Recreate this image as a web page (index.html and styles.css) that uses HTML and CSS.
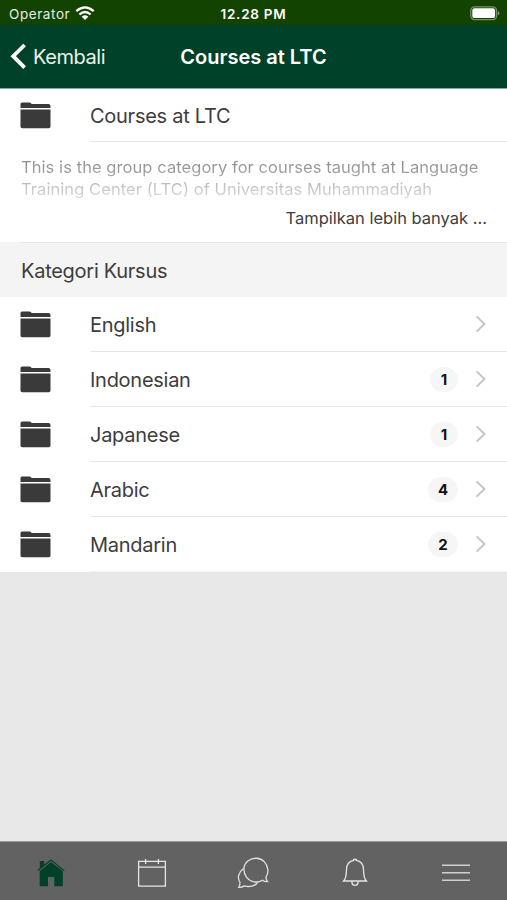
FILE: index.html
```html
<!DOCTYPE html>
<html lang="id">
<head>
<meta charset="utf-8">
<title>Courses at LTC</title>
<link rel="stylesheet" href="styles.css">
</head>
<body>
<svg class="defs" width="0" height="0" aria-hidden="true">
  <symbol id="folder" viewBox="0 0 31 27"><path d="M.5 6V2Q.5.5 2 .5H9.5Q11 .5 11.7 2H28.5Q30.5 2 30.5 4V6Z"/><path d="M.5 7.5H30.5V24.5Q30.5 26.2 28.8 26.2H2.2Q.5 26.2.5 24.5Z"/></symbol>
  <symbol id="chevron" viewBox="0 0 12 18"><path d="M1.6 1.4 9.5 9 1.6 16.6" fill="none" stroke="#c5c5c5" stroke-width="2"/></symbol>
</svg>
<div class="status">
  <div class="carrier"><span>Operator</span>
    <svg width="20" height="15" viewBox="0 0 20 15" fill="none" stroke="#fff" stroke-width="2.3"><path d="M1.3 5.2Q10-2.5 18.7 5.2M4.4 8.5Q10 3.4 15.6 8.5"/><path d="M10 14 6.7 10.7Q10 8 13.3 10.7Z" fill="#fff" stroke="none"/></svg>
  </div>
  <div class="time">12.28 PM</div>
  <svg class="battery" width="30" height="15" viewBox="0 0 30 15"><rect x=".8" y=".8" width="25.8" height="12.8" rx="3.8" fill="none" stroke="#789166" stroke-width="1.3"/><rect x="2.3" y="2.3" width="22.8" height="9.8" rx="2.2" fill="#fff"/><path d="M27.8 5Q29.5 5.7 29.5 7.2T27.8 9.4Z" fill="#789166"/></svg>
</div>
<header class="header">
  <div class="back"><svg width="17" height="28" viewBox="0 0 17 28"><path d="M14.6 2 3.2 13.2 14.6 24.6" fill="none" stroke="#fff" stroke-width="3.8"/></svg><span>Kembali</span></div>
  <h1 class="title">Courses at LTC</h1>
</header>
<main class="content">
  <div class="row first"><svg class="folder"><use href="#folder"/></svg><div class="label"><span class="name heading">Courses at LTC</span></div></div>
  <section class="summary">
    <p class="description"><span class="line one">This is the group category for courses taught at Language</span><span class="line two">Training Center (LTC) of Universitas Muhammadiyah</span></p>
    <div class="more"><span>Tampilkan lebih banyak ...</span></div>
  </section>
  <h2 class="divider"><span>Kategori Kursus</span></h2>
  <div class="row"><svg class="folder"><use href="#folder"/></svg><div class="label"><span class="name">English</span><svg class="chevron"><use href="#chevron"/></svg></div></div>
  <div class="row"><svg class="folder"><use href="#folder"/></svg><div class="label"><span class="name">Indonesian</span><span class="badge">1</span><svg class="chevron"><use href="#chevron"/></svg></div></div>
  <div class="row"><svg class="folder"><use href="#folder"/></svg><div class="label"><span class="name">Japanese</span><span class="badge">1</span><svg class="chevron"><use href="#chevron"/></svg></div></div>
  <div class="row"><svg class="folder"><use href="#folder"/></svg><div class="label"><span class="name">Arabic</span><span class="badge wide">4</span><svg class="chevron"><use href="#chevron"/></svg></div></div>
  <div class="row"><svg class="folder"><use href="#folder"/></svg><div class="label last"><span class="name">Mandarin</span><span class="badge wide">2</span><svg class="chevron"><use href="#chevron"/></svg></div></div>
</main>
<nav class="tabs">
  <div class="tab"><svg width="30" height="32" viewBox="0 0 30 32"><path d="M3.8 10V3H8.2V6.5L15 1.2 28.6 12.2 27.8 13 15 2.8 2.2 13 1.4 12.2Z" fill="#063f2b"/><path d="M3.7 13 15 4 26.8 13V28.3H18.3V19H12V28.3H3.7Z" fill="#004128"/></svg></div>
  <div class="tab"><svg width="30" height="32" viewBox="0 0 30 32" fill="none" stroke="#e5e5e5" stroke-width="1.3"><path d="M1.6 3.4H28.4V28.2H1.6ZM1.6 9.2H28.4M8.6 1V6M21.4 1V6"/></svg></div>
  <div class="tab"><svg width="32" height="34" viewBox="0 0 32 34" fill="none" stroke="#e0e0e0" stroke-width="1.3"><path d="M30.5 24.6Q27.5 24.8 25.4 23.2C20.4 26.4 13.4 25.2 9.6 20.3C5.4 14.4 6.2 7.4 11.2 3.7C16.1.1 23.1.5 27.2 4.6C31.5 9 32 15.8 28.9 20.3Q29 22.8 30.5 24.6Z"/><path d="M6.4 11.4C1.3 15.3.1 21.2 3 25.5Q3 28.4 1.7 30.4Q4.8 30.6 7.3 28.9C12.6 30.4 18.3 29.1 20.6 25.3"/></svg></div>
  <div class="tab"><svg width="30" height="32" viewBox="0 0 30 32" fill="none" stroke="#e5e5e5" stroke-width="1.3"><path d="M13.7 2.4V1.4H16.3V2.4C21.4 3.3 23.4 6.8 23.5 11.4C23.6 17.5 24.1 20.6 26.4 23H3.6C5.9 20.6 6.4 17.5 6.5 11.4C6.6 6.8 8.6 3.3 13.7 2.4ZM11.8 23.4Q12 27.4 15 27.4T18.2 23.4"/></svg></div>
  <div class="tab"><svg width="30" height="32" viewBox="0 0 30 32" stroke="#d0d0d0" stroke-width="1.6"><path d="M1 7.2H29M1 14.8H29M1 22.2H29"/></svg></div>
</nav>
</body>
</html>
```

FILE: styles.css
```css
* { box-sizing: border-box; }
body { margin: 0; width: 507px; height: 900px; display: flex; flex-direction: column; background: #e8e8e8; color: #3d3d3d; font-family: Inter, "Liberation Sans", sans-serif; overflow: hidden; }
.defs { position: absolute; }
svg { display: block; flex-shrink: 0; }
.status { height: 25px; flex-shrink: 0; background: #124300; color: #fff; display: grid; grid-template-columns: 1fr auto 1fr; align-items: center; padding: 2px 7px 0 9px; font-size: 13.5px; }
.carrier { display: flex; align-items: center; gap: 5px; color: #e7ede4; letter-spacing: .58px; }
.time { font-weight: 600; font-size: 13.5px; letter-spacing: .75px; margin-right: 2px; }
.battery { justify-self: end; }
.header { height: 64px; flex-shrink: 0; background: #004129; border-bottom: 1px solid #8ca99a; color: #fff; display: grid; grid-template-columns: 1fr auto 1fr; align-items: center; padding: 0 10px; }
.back { display: flex; align-items: center; gap: 6px; font-size: 20px; letter-spacing: -.45px; color: #eaf1ee; }
.title { margin: 0; font-size: 20px; font-weight: 600; }
.content { background: #fff; height: 483px; flex-shrink: 0; }
.row { height: 55px; display: flex; align-items: center; padding-left: 20px; }
.first { height: 53px; }
.folder { width: 31px; height: 27px; margin-right: 39px; fill: #3a3a3a; }
.label { flex: 1; align-self: stretch; display: flex; align-items: center; border-bottom: 1px solid #e7e7e7; padding-right: 20px; }
.last { border-bottom-color: #f4f4f4; }
.name { font-size: 20px; letter-spacing: -.27px; margin-right: auto; padding-top: 1px; }
.chevron { width: 12px; height: 18px; }
.badge { width: 28px; height: 25px; border-radius: 13px; background: #f6f6f6; color: #111; font-size: 15px; font-weight: 700; line-height: 25px; text-align: center; margin-right: 17px; }
.wide { width: 30px; }
.summary { height: 100px; padding: 14px 20px 0 21px; }
.description { margin: 0; font-size: 16.5px; line-height: 22px; letter-spacing: .07px; height: 52px; white-space: nowrap; }
.line { display: block; width: max-content; color: transparent; background-clip: text; -webkit-background-clip: text; }
.one { background-image: linear-gradient(#858585, #a8a8a8); }
.two { background-image: linear-gradient(#b0b0b0, #dedede); }
.more { font-size: 16.5px; line-height: 20px; text-align: right; }
.divider { height: 55px; margin: 0; background: linear-gradient(#e7e7e7, #e7e7e7) 21px 0 / 100% 1px no-repeat #f4f4f4; padding: 2px 21px 0; font-size: 20px; letter-spacing: -.27px; font-weight: 400; display: flex; align-items: center; }
.tabs { margin-top: auto; height: 59px; flex-shrink: 0; background: #626262; border-top: 1px solid #999; display: grid; grid-template-columns: repeat(5, 1fr); }
.tab { display: flex; align-items: center; justify-content: center; padding-top: 6px; }
```
